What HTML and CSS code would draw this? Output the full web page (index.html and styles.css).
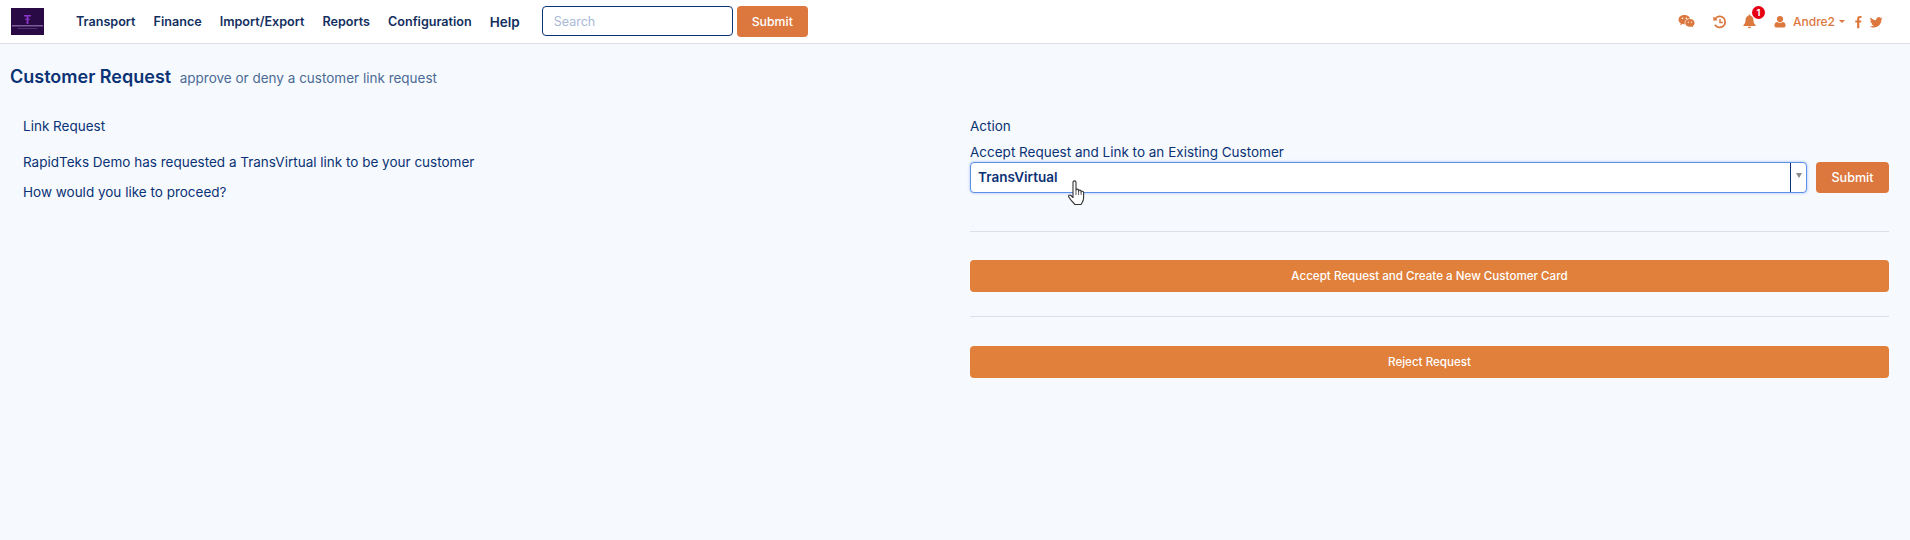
FILE: index.html
```html
<!DOCTYPE html>
<html lang="en">
<head>
  <meta charset="UTF-8">
  <title>Customer Request</title>
  <link rel="stylesheet" href="styles.css">
</head>
<body>
  <nav class="topbar">
    <svg class="logo" viewBox="0 0 33 27">
      <rect width="33" height="27" fill="#2a0a45"/>
      <path d="M13 7h7v1.5h-2.600v2.200h1.600v1h-1.600V16h-1.800v-4.300H14v-1h1.600V8.500H13z" fill="#8a35c8"/>
      <rect x="1" y="17" width="31" height="1.500" fill="#7d5a9c"/>
      <rect x="7" y="20" width="19" height="1" fill="#4e2f70"/>
    </svg>
    <ul class="menu">
      <li>Transport</li>
      <li>Finance</li>
      <li>Import/Export</li>
      <li>Reports</li>
      <li>Configuration</li>
      <li class="help">Help</li>
    </ul>
    <form class="search">
      <input type="text" placeholder="Search">
      <button type="button" class="btn">Submit</button>
    </form>
    <div class="tools">
      <svg class="ic wechat" viewBox="0 0 18 16"><path d="M6.800 1C3.300 1 .5 3.200.5 6c0 1.600.9 3 2.400 3.900l-.7 2 2.400-1.300c.7.200 1.400.3 2.100.3h.5a4.500 4.500 0 0 1-.2-1.300c0-2.700 2.500-4.800 5.600-4.800h.4C12.400 2.600 9.900 1 6.800 1z"/><path d="M17.600 9.500c0-2.300-2.300-4.100-5-4.100s-5 1.800-5 4.100 2.300 4.100 5 4.100c.6 0 1.100-.1 1.700-.2l1.900 1-.5-1.600c1.100-.8 1.900-2 1.900-3.300z"/><circle cx="4.700" cy="4.500" r=".9" fill="#fff"/><circle cx="8.900" cy="4.500" r=".9" fill="#fff"/><circle cx="10.900" cy="8.700" r=".7" fill="#fff"/><circle cx="14.300" cy="8.700" r=".7" fill="#fff"/></svg>
      <svg class="ic history" viewBox="0 0 14 14"><path d="M2.300 3.600A5.500 5.500 0 1 1 2 9.800" fill="none" stroke="currentColor" stroke-width="1.800"/><path d="M.3 1.500l4.500 3.700-4.500.6z"/><path d="M7 4v3.600h2.900" fill="none" stroke="currentColor" stroke-width="1.500"/></svg>
      <span class="bell">
        <svg class="ic" viewBox="0 0 14 15"><path d="M7 0a1 1 0 0 1 1 1.200c2 .5 3.200 2.200 3.200 4.300 0 3.300 1.200 4.700 2.300 5.900v1H.5v-1c1.100-1.200 2.300-2.600 2.300-5.900C2.800 3.400 4 1.700 6 1.200A1 1 0 0 1 7 0zM5.300 13.200h3.400a1.700 1.700 0 0 1-3.400 0z"/></svg>
        <b class="badge">1</b>
      </span>
      <span class="user">
        <svg class="ic" viewBox="0 0 12 12"><path d="M6 0a3 3 0 0 1 0 6.200A3 3 0 0 1 6 0zM3.300 6c.7.600 1.600 1 2.700 1s2-.4 2.700-1c1.800 0 2.900 1.500 2.900 3.600 0 1.300-.8 2-1.900 2H2.300c-1.100 0-1.900-.7-1.900-2C.4 7.500 1.500 6 3.300 6z"/></svg>
        Andre2<i class="caret"></i>
      </span>
      <svg class="ic fb" viewBox="0 0 8 14"><path d="M7.400.2v2.200H6.100c-1 0-1.200.5-1.200 1.200v1.600h2.400l-.3 2.400H4.900V14H2.400V7.600H.3V5.200h2.100V3.400C2.400 1.300 3.700.1 5.600.1c.8 0 1.500.1 1.800.1z"/></svg>
      <svg class="ic tw" viewBox="0 0 14 12"><path d="M14 1.500c-.5.700-1.100 1.300-1.700 1.700v.4C12.300 7.400 9.400 12 4.100 12 2.500 12 1 11.500-.1 10.800h.7c1.300 0 2.600-.5 3.600-1.200-1.300 0-2.300-.9-2.700-2h.5c.3 0 .5 0 .8-.1C1.400 7.200.3 6 .3 4.600c.4.200.9.400 1.300.4A2.900 2.900 0 0 1 .7 1.200c1.400 1.700 3.500 2.900 5.900 3a2.900 2.900 0 0 1 4.900-2.600c.6-.1 1.300-.4 1.800-.7-.2.700-.6 1.200-1.300 1.600.6-.1 1.100-.2 2-.9z"/></svg>
    </div>
  </nav>

  <main class="page">
    <h1 class="title">Customer Request <small>approve or deny a customer link request</small></h1>
    <div class="cols">
      <section class="col">
        <p class="head">Link Request</p>
        <p class="msg">RapidTeks Demo has requested a TransVirtual link to be your customer</p>
        <p class="msg">How would you like to proceed?</p>
      </section>
      <section class="col right">
        <p class="head">Action</p>
        <label class="lbl">Accept Request and Link to an Existing Customer</label>
        <div class="pick">
          <div class="combo">
            <span class="val">TransVirtual</span>
            <span class="arrow"><i></i></span>
          </div>
          <button type="button" class="btn">Submit</button>
        </div>
        <hr>
        <button type="button" class="btn wide">Accept Request and Create a New Customer Card</button>
        <hr class="hr2">
        <button type="button" class="btn wide">Reject Request</button>
      </section>
    </div>
  </main>

  <!-- mouse pointer from the capture -->
  <svg class="hand" viewBox="0 0 18 26">
    <path d="M5 2.200c0-1.800 3-1.800 3 0V10c0-1.200 2.600-1.200 2.600.2v.8c0-1.200 2.500-1.200 2.500.3v.7c.1-1.200 2.500-1.100 2.500.4V18c0 3-1.500 4.500-2.500 6.500H7C5 22.500 2.500 20 .8 17c-.8-1.500 1-2.700 2.200-1.500l2 2z" fill="#fff" stroke="#333" stroke-width="1.100" stroke-linejoin="round"/>
    <path d="M8 10v5M10.600 11v4M13.100 12v3" stroke="#333" stroke-width=".8"/>
  </svg>
</body>
</html>
```

FILE: styles.css
```css
* { box-sizing:border-box; }
html,body { margin:0; height:100%; }
body { background:#f6faff; color:#0b3274; font-family:Inter,"Noto Sans",sans-serif; font-size:13.500px; overflow:hidden; position:relative; }

.topbar { display:flex; align-items:center; height:44px; background:#fff; border-bottom:1px solid #dcdfe6; padding:0 8px 0 11px; }
.logo { width:33px; height:27px; margin-top:-1px; }
.menu { display:flex; align-items:center; gap:18px; list-style:none; margin:0 0 0 32px; padding:0; font-size:12.600px; font-weight:600; color:#132f5e; }
.menu .help { font-size:13.500px; }
.search { display:flex; gap:4px; margin-left:22px; }
.search input { width:191px; height:30px; border:1.500px solid #0b3274; border-radius:4px; padding:0 11px; font:12.500px Inter,sans-serif; background:#fff; outline:none; }
.search input::placeholder { color:#a9b8d6; }
.btn { background:#dc773d; color:#fff; border:none; border-radius:4px; font:500 12.300px Inter,sans-serif; height:31px; width:71px; padding:0; }

.tools { display:flex; align-items:center; margin-left:auto; margin-right:19px; color:#dc773d; font-size:12px; }
.ic { fill:currentColor; display:block; }
.wechat { width:17px; height:15px; }
.history { width:14px; height:14px; margin-left:18px; }
.bell { position:relative; margin-left:16px; }
.bell .ic { width:13px; height:15px; }
.badge { position:absolute; top:-8px; left:9px; width:13px; height:13px; line-height:13px; border-radius:50%; background:#e60012; color:#fff; font-size:9px; text-align:center; }
.user { display:flex; align-items:center; margin-left:18px; font-weight:500; }
.user .ic { width:12px; height:12px; margin-right:7px; }
.caret { width:0; height:0; margin-left:4px; border:3px solid transparent; border-top-color:#dc773d; border-bottom:0; }
.fb { width:7px; height:14px; margin-left:10px; }
.tw { width:13px; height:12px; margin-left:8px; }

.page { padding:0 21px 0 8px; }
.title { margin:20px 0 0 2px; font-size:18px; line-height:26px; font-weight:600; color:#0b3274; }
.title small { margin-left:4px; font-size:13.500px; font-weight:400; color:#4c6a94; }
.cols { display:flex; margin-top:25px; }
.col { width:947px; padding-left:15px; }
.col.right { flex:1; width:auto; }
p { margin:0; }
.head { line-height:20px; height:20px; }
.msg { line-height:20px; margin-top:10px; }
.head + .msg { margin-top:16px; }
.lbl { display:block; line-height:20px; margin-top:6px; }
.pick { display:flex; gap:9px; height:31px; }
.combo { flex:1; display:flex; background:#fff; border:1px solid #5b8fe8; border-radius:4px; box-shadow:0 0 3px rgba(60,110,220,.45); }
.val { flex:1; padding-left:7px; line-height:29px; font-weight:600; color:#0b3274; }
.arrow { width:16px; border-left:1px solid #0b3274; display:flex; justify-content:center; padding-top:10px; }
.arrow i { width:0; height:0; border:3.500px solid transparent; border-top:5px solid #8a8a8a; border-bottom:0; }
.pick .btn { width:73px; font-size:12.600px; }
hr { border:0; border-top:1px solid #dcdfe6; margin:38px 0 28px; }
.hr2 { margin:24px 0 29px; }
.wide { display:block; width:100%; height:32px; background:#e0803b; font-size:11.600px; }

.hand { position:absolute; left:1068px; top:180px; width:18px; height:26px; }
```
